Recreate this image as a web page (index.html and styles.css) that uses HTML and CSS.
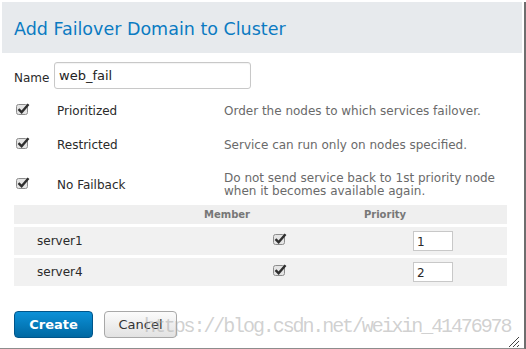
FILE: index.html
```html
<!DOCTYPE html>
<html>
<head>
<meta charset="utf-8">
<link rel="stylesheet" href="styles.css">
</head>
<body>
<div class="dialog">
  <div class="header"><h1 class="title">Add Failover Domain to Cluster</h1></div>
  <div class="body">
    <div class="name-row">
      <span class="name-label">Name</span>
      <div class="text-input">web_fail</div>
    </div>
    <div class="options">
      <div class="opt">
        <span class="cb"><svg width="15" height="12" viewBox="0 0 15 12"><rect x="0.5" y="1.5" width="11" height="10" rx="2" fill="#e4e4e4" stroke="#8c8c8c"/><path d="M2.5 6.2 L5.6 9.2 L12.5 1.2" fill="none" stroke="#2e2e2e" stroke-width="2.4"/></svg></span>
        <span class="opt-label">Prioritized</span>
        <span class="opt-desc">Order the nodes to which services failover.</span>
      </div>
      <div class="opt">
        <span class="cb"><svg width="15" height="12" viewBox="0 0 15 12"><rect x="0.5" y="1.5" width="11" height="10" rx="2" fill="#e4e4e4" stroke="#8c8c8c"/><path d="M2.5 6.2 L5.6 9.2 L12.5 1.2" fill="none" stroke="#2e2e2e" stroke-width="2.4"/></svg></span>
        <span class="opt-label">Restricted</span>
        <span class="opt-desc">Service can run only on nodes specified.</span>
      </div>
      <div class="opt opt-last">
        <span class="cb"><svg width="15" height="12" viewBox="0 0 15 12"><rect x="0.5" y="1.5" width="11" height="10" rx="2" fill="#e4e4e4" stroke="#8c8c8c"/><path d="M2.5 6.2 L5.6 9.2 L12.5 1.2" fill="none" stroke="#2e2e2e" stroke-width="2.4"/></svg></span>
        <span class="opt-label">No Failback</span>
        <span class="opt-desc">Do not send service back to 1st priority node<br>when it becomes available again.</span>
      </div>
    </div>
    <div class="nodes">
      <div class="nrow nhead">
        <span></span>
        <span class="hcell">Member</span>
        <span class="hcell">Priority</span>
        <span></span>
      </div>
      <div class="nrow">
        <span class="node-name">server1</span>
        <span class="mcell"><svg width="15" height="12" viewBox="0 0 15 12"><rect x="0.5" y="1.5" width="11" height="10" rx="2" fill="#e4e4e4" stroke="#8c8c8c"/><path d="M2.5 6.2 L5.6 9.2 L12.5 1.2" fill="none" stroke="#2e2e2e" stroke-width="2.4"/></svg></span>
        <span class="pcell"><span class="prio">1</span></span>
        <span></span>
      </div>
      <div class="nrow">
        <span class="node-name">server4</span>
        <span class="mcell"><svg width="15" height="12" viewBox="0 0 15 12"><rect x="0.5" y="1.5" width="11" height="10" rx="2" fill="#e4e4e4" stroke="#8c8c8c"/><path d="M2.5 6.2 L5.6 9.2 L12.5 1.2" fill="none" stroke="#2e2e2e" stroke-width="2.4"/></svg></span>
        <span class="pcell"><span class="prio">2</span></span>
        <span></span>
      </div>
    </div>
    <div class="actions">
      <button class="btn btn-primary">Create</button>
      <button class="btn btn-default">Cancel</button>
    </div>
  </div>
  <div class="watermark">https://blog.csdn.net/weixin_41476978</div>
  <svg class="grip" width="12" height="10" viewBox="0 0 12 10"><path d="M1 10 L11 0 M5 10 L11 4 M9 10 L11 8" stroke="#444" stroke-width="1" fill="none"/></svg>
</div>
</body>
</html>
```
FILE: styles.css
```css
* { box-sizing: border-box; }
html, body { margin: 0; padding: 0; background: #fff; }
body {
  width: 526px;
  height: 349px;
  overflow: hidden;
  font-family: "DejaVu Sans", sans-serif;
  font-size: 12px;
  color: #2a2a2a;
}
.dialog {
  position: relative;
  width: 526px;
  height: 349px;
  border-right: 2px solid #6e6e6e;
  border-bottom: 3px solid #8d8d8d;
}
.header {
  margin: 2px 2px 0 2px;
  height: 51px;
  background: #e7eaed;
  display: flex;
  align-items: center;
  padding-left: 12px;
}
.title {
  margin: 0;
  font-family: "DejaVu Sans", sans-serif;
  font-weight: normal;
  font-size: 17.5px;
  color: #0b7bc2;
  padding-top: 2px;
}
.body {
  padding: 9px 0 0 14px;
}
.name-row {
  display: flex;
  align-items: center;
  height: 27px;
}
.name-label {
  font-size: 12px;
  width: 40px;
  padding-top: 4px;
}
.text-input {
  width: 197px;
  height: 27px;
  border: 1px solid #c8c8c8;
  border-radius: 3px;
  padding: 5px 0 0 4px;
  font-size: 13px;
  color: #222;
  box-shadow: inset 0 1px 1px rgba(0,0,0,0.05);
}
.options {
  margin-top: 5px;
}
.opt {
  display: grid;
  grid-template-columns: 43px 167px 1fr;
  align-items: center;
  padding: 10px 0;
}
.opt-last { padding-bottom: 7px; }
.cb { display: flex; align-items: center; padding-left: 2px; margin-top: -4px; }
.opt-label { line-height: 14px; color: #2a2a2a; }
.opt-desc { line-height: 13px; color: #6a6a6a; }
.nodes {
  width: 493px;
  display: flex;
  flex-direction: column;
  gap: 3px;
}
.nrow {
  display: grid;
  grid-template-columns: 136px 154px 162px 1fr;
  align-items: center;
  height: 28px;
  background: #f1f1f1;
}
.nhead {
  height: 19px;
  background: #efefef;
}
.hcell {
  text-align: center;
  font-size: 10px;
  font-weight: bold;
  color: #777;
}
.node-name { padding-left: 23px; color: #2a2a2a; }
.mcell { padding-left: 123px; display: flex; margin-top: -4px; }
.pcell { padding-left: 109px; display: flex; }
.prio {
  width: 40px;
  height: 20px;
  background: #fff;
  border: 1px solid #c8c8c8;
  padding: 3px 0 0 3px;
  font-size: 12px;
  line-height: 14px;
}
.actions {
  display: flex;
  gap: 11px;
  margin-top: 25px;
}
.btn {
  height: 27px;
  border-radius: 4px;
  font-family: "DejaVu Sans", sans-serif;
  font-size: 13px;
  padding: 0;
}
.btn-primary {
  width: 79px;
  background: linear-gradient(#0c91d8, #0068a2);
  border: 1px solid #00558a;
  color: #fff;
  font-weight: bold;
}
.btn-default {
  width: 73px;
  background: linear-gradient(#fbfbfb, #e2e2e2);
  border: 1px solid #a8a8a8;
  color: #333;
}
.watermark {
  position: absolute;
  left: 144px;
  top: 313px;
  font-family: "Liberation Mono", monospace;
  font-size: 20px;
  letter-spacing: -2.1px;
  color: rgba(170, 170, 170, 0.55);
  white-space: nowrap;
}
.grip {
  position: absolute;
  right: 4px;
  bottom: 1px;
}
```
